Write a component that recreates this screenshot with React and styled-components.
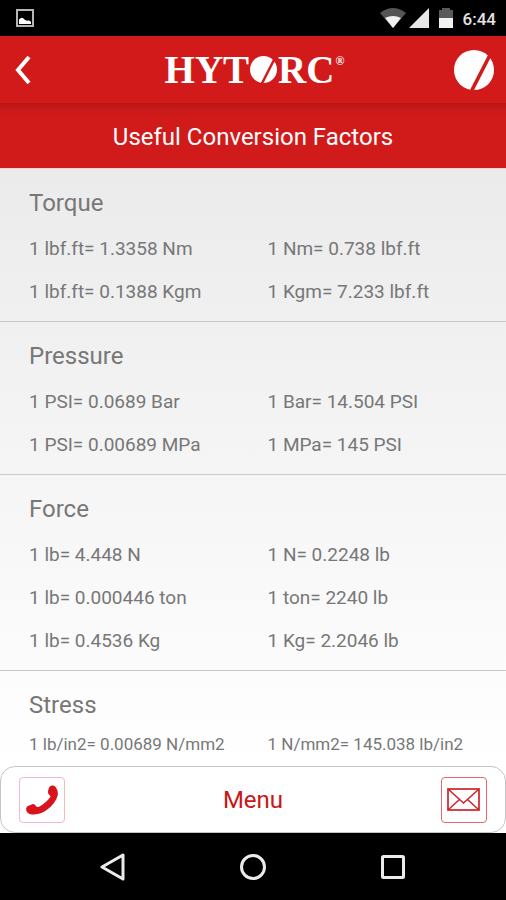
import React from "react";
import styled, { createGlobalStyle } from "styled-components";

const sections = [
  {
    title: "Torque",
    rows: [
      ["1 lbf.ft= 1.3358 Nm", "1 Nm= 0.738 lbf.ft"],
      ["1 lbf.ft= 0.1388 Kgm", "1 Kgm= 7.233 lbf.ft"],
    ],
  },
  {
    title: "Pressure",
    rows: [
      ["1 PSI= 0.0689 Bar", "1 Bar= 14.504 PSI"],
      ["1 PSI= 0.00689 MPa", "1 MPa= 145 PSI"],
    ],
  },
  {
    title: "Force",
    rows: [
      ["1 lb= 4.448 N", "1 N= 0.2248 lb"],
      ["1 lb= 0.000446 ton", "1 ton= 2240 lb"],
      ["1 lb= 0.4536 Kg", "1 Kg= 2.2046 lb"],
    ],
  },
  {
    title: "Stress",
    compact: true,
    rows: [["1 lb/in2= 0.00689 N/mm2", "1 N/mm2= 145.038 lb/in2"]],
  },
];

function Ball({ size }) {
  return (
    <svg width={size} height={size} viewBox="0 0 40 40" aria-hidden="true">
      <circle cx="20" cy="20" r="20" fill="#fff" />
      <path d="M37 3L17 42" stroke="#d11a1b" strokeWidth="3.6" />
    </svg>
  );
}

function App() {
  return (
    <>
      <GlobalStyle />
      <Screen>
        <StatusBar>
          <svg width="18" height="18" viewBox="0 0 18 18" aria-hidden="true">
            <rect x="1" y="1" width="16" height="16" fill="none" stroke="#b5b5b5" strokeWidth="2" />
            <path d="M3 15V10.500Q6 7 8.500 10.500Q10 12 12 11.500Q14 11 15 13V15Z" fill="#fff" />
          </svg>
          <StatusIcons>
            <svg width="26" height="20" viewBox="0 0 26 20" aria-hidden="true">
              <path d="M0 5Q13 -5 26 5L13 20Z" fill="#555" />
              <path d="M5 10Q13 6 21 10L13 20Z" fill="#f2f2f2" />
            </svg>
            <svg width="20" height="20" viewBox="0 0 20 20" aria-hidden="true">
              <path d="M20 0V20H0Z" fill="#e8e8e8" />
            </svg>
            <Battery width="14" height="20" viewBox="0 0 14 20" aria-hidden="true">
              <path d="M3 0H11V2H14V10H0V2H3Z" fill="#5a5a5a" />
              <path d="M0 10H14V20H0Z" fill="#f2f2f2" />
            </Battery>
            <Time>6:44</Time>
          </StatusIcons>
        </StatusBar>

        <Header>
          <BackButton aria-label="Back">
            <svg width="16" height="30" viewBox="0 0 16 30" aria-hidden="true">
              <path d="M14 2L3 15L14 28" fill="none" stroke="#fff" strokeWidth="4" />
            </svg>
          </BackButton>
          <Logo aria-label="HYTORC">
            <span>HYT</span>
            <Ball size={27} />
            <span>RC</span>
            <Mark>®</Mark>
          </Logo>
          <BallButton aria-label="Home">
            <Ball size={40} />
          </BallButton>
        </Header>

        <Title>Useful Conversion Factors</Title>

        <Content>
          {sections.map((section) => (
            <Section key={section.title}>
              <Heading>{section.title}</Heading>
              <List>
                {section.rows.flat().map((text) => (
                  <Item key={text} $compact={section.compact}>
                    {text}
                  </Item>
                ))}
              </List>
            </Section>
          ))}
        </Content>

        <Footer>
          <IconButton aria-label="Call" $border="#f3b9bf">
            <svg width="32" height="30" viewBox="0 0 32 30" aria-hidden="true">
              <path
                d="M23.500 2C25 0 28 0 29.500 2C31.500 4.500 32.500 8 31.500 11C30 16 26.500 20.500 22 24C18 27 13 29.500 8 29.500C5 29.500 2 29 1 27C-0.500 24.500 0 22 2 21L7 19C9 18.500 9.500 21.500 11.500 22C13 22.300 16 20 18.500 18C21 16 23.500 13.500 24.500 11.500C24.500 10.500 22 9.500 22 7.500C22 5.500 22.500 3.500 23.500 2Z"
                fill="#d9131c"
              />
            </svg>
          </IconButton>
          <MenuButton>Menu</MenuButton>
          <IconButton aria-label="Mail" $border="#dd6b6e">
            <svg width="33" height="23" viewBox="0 0 33 23" aria-hidden="true">
              <g fill="none" stroke="#cf2226">
                <rect x="1" y="1" width="31" height="21" strokeWidth="1.7" />
                <path d="M1 1L16.500 15L32 1M1 22L12.500 11.500M32 22L20.500 11.500" strokeWidth="1.500" />
              </g>
            </svg>
          </IconButton>
        </Footer>

        <NavBar>
          <NavButton aria-label="Back">
            <svg width="28" height="28" viewBox="0 0 28 28" aria-hidden="true">
              <path d="M24 2V26L3 14Z" />
            </svg>
          </NavButton>
          <NavButton aria-label="Home">
            <svg width="28" height="28" viewBox="0 0 28 28" aria-hidden="true">
              <circle cx="14" cy="14" r="11.500" />
            </svg>
          </NavButton>
          <NavButton aria-label="Recent apps">
            <svg width="28" height="28" viewBox="0 0 28 28" aria-hidden="true">
              <rect x="3.500" y="3.500" width="21" height="21" rx="1" />
            </svg>
          </NavButton>
        </NavBar>
      </Screen>
    </>
  );
}

const GlobalStyle = createGlobalStyle`
  * {
    box-sizing: border-box;
  }
  body {
    margin: 0;
    font-family: Roboto, "Liberation Sans", sans-serif;
  }
  button {
    padding: 0;
    border: none;
    background: none;
    font: inherit;
    cursor: pointer;
  }
  svg {
    display: block;
    flex-shrink: 0;
  }
`;

const Screen = styled.div`
  display: flex;
  flex-direction: column;
  height: 100vh;
  background: #fff;
`;

const StatusBar = styled.div`
  display: flex;
  flex-shrink: 0;
  align-items: center;
  justify-content: space-between;
  height: 36px;
  padding: 0 10px 0 16px;
  background: #000;
`;

const StatusIcons = styled.div`
  display: flex;
  align-items: center;
  gap: 3px;
`;

const Battery = styled.svg`
  margin: 0 7px;
`;

const Time = styled.span`
  padding-top: 2px;
  color: #e4e4e4;
  font-size: 17px;
  font-weight: 500;
`;

const Header = styled.header`
  display: flex;
  flex-shrink: 0;
  align-items: center;
  justify-content: space-between;
  height: 67px;
  padding: 0 12px 0 15px;
  background: #d31a1b;
`;

const BackButton = styled.button`
  width: 40px;
`;

const BallButton = styled.button`
  width: 40px;
`;

const Logo = styled.div`
  display: flex;
  align-items: center;
  gap: 1px;
  color: #fff;
  font-family: "Liberation Serif", serif;
  font-size: 39px;
  font-weight: bold;
  line-height: 40px;
`;

const Mark = styled.span`
  align-self: flex-start;
  font-size: 12px;
  line-height: 22px;
`;

const Title = styled.h1`
  flex-shrink: 0;
  margin: 0;
  padding-top: 4px;
  background: linear-gradient(#b91717, #cc1919 8px, #d11a1a 16px);
  color: #fff;
  font-size: 24px;
  font-weight: 400;
  line-height: 61px;
  text-align: center;
`;

const Content = styled.main`
  flex: 1;
  min-height: 0;
  overflow-y: auto;
  scrollbar-width: none;
  border-top: 1px solid #f3d3d0;
  background: linear-gradient(#ebebeb, #fff);
  color: #777;
`;

const Section = styled.section`
  padding: 19px 0 8px 29px;

  & + & {
    border-top: 1px solid #c9c9c9;
  }
`;

const Heading = styled.h2`
  margin: 0 0 9px;
  font-size: 24px;
  font-weight: 400;
  line-height: 30px;
`;

const List = styled.ul`
  display: grid;
  grid-template-columns: 1fr 1fr;
  margin: 0;
  padding: 0;
  list-style: none;
`;

const Item = styled.li`
  font-size: ${(props) => (props.$compact ? "17px" : "19px")};
  line-height: ${(props) => (props.$compact ? "30px" : "43px")};
`;

const Footer = styled.footer`
  display: flex;
  flex-shrink: 0;
  align-items: center;
  justify-content: space-between;
  height: 67px;
  padding: 0 18px;
  border: 1px solid #c4c4c4;
  border-radius: 15px;
  background: #fff;
`;

const IconButton = styled.button`
  display: flex;
  align-items: center;
  justify-content: center;
  width: 46px;
  height: 46px;
  border: 1px solid ${(props) => props.$border};
  border-radius: 4px;
`;

const MenuButton = styled.button`
  color: #cb1517;
  font-size: 24px;
`;

const NavBar = styled.nav`
  display: flex;
  flex-shrink: 0;
  align-items: center;
  justify-content: center;
  gap: 112px;
  height: 67px;
  background: #000;
`;

const NavButton = styled.button`
  svg {
    fill: none;
    stroke: #ececec;
    stroke-width: 3;
    stroke-linejoin: round;
  }
`;

export default App;
